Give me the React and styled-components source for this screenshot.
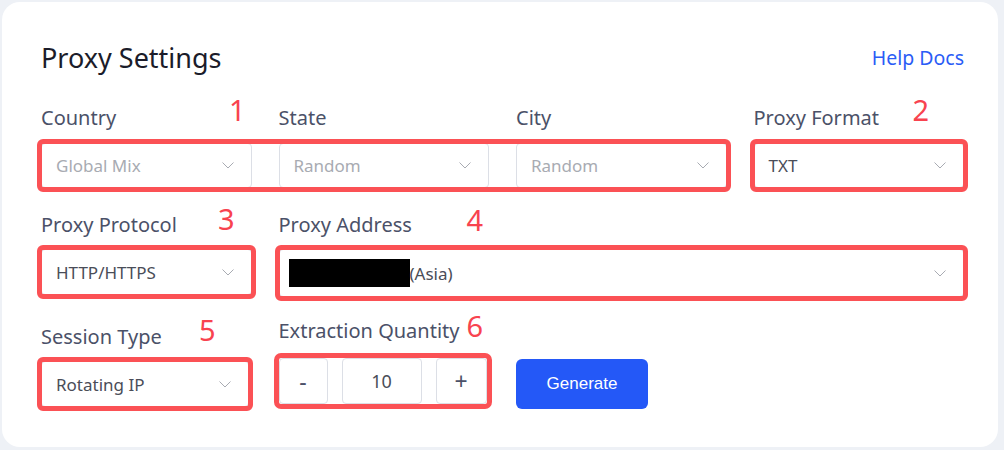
import React from "react";
import styled, { createGlobalStyle } from "styled-components";

const GlobalStyle = createGlobalStyle`
  html, body { margin: 0; padding: 0; }
  body {
    background: #eef1f6;
    font-family: "Noto Sans", "Open Sans", sans-serif;
  }
  * { box-sizing: border-box; }
`;

const Page = styled.div`
  padding: 2px 6px 3px 2px;
`;

const Card = styled.div`
  background: #ffffff;
  border-radius: 18px;
  height: 445px;
  padding: 38px 34px 0 39px;
`;

const Header = styled.div`
  display: flex;
  align-items: center;
  justify-content: space-between;
  margin-bottom: 29px;
`;

const Title = styled.h1`
  margin: 0;
  font-size: 27px;
  line-height: 36px;
  font-weight: 400;
  color: #1b1c2a;
`;

const HelpLink = styled.a`
  font-size: 19.5px;
  line-height: 26px;
  color: #2a5cf6;
  text-decoration: none;
`;

const Grid = styled.div`
  display: grid;
  grid-template-columns: repeat(4, 1fr);
  column-gap: 27px;
  margin-top: ${(p) => p.$top || 0}px;
`;

const Field = styled.div`
  display: flex;
  flex-direction: column;
  gap: ${(p) => p.$gap || 11}px;
  grid-column: span ${(p) => p.$span || 1};
  margin-top: ${(p) => p.$top || 0}px;
`;

const Label = styled.div`
  position: relative;
  font-size: 20px;
  line-height: 26px;
  color: #4b5168;
`;

const Annotation = styled.span`
  position: absolute;
  left: ${(p) => p.$x}px;
  top: ${(p) => p.$y}px;
  font-size: 29px;
  line-height: 29px;
  color: #f8434f;
`;

const Mark = styled.div`
  outline: 5px solid #fb5155;
  outline-offset: -1px;
  border-radius: 2px;
  grid-column: span ${(p) => p.$span || 1};
  width: ${(p) => (p.$w ? `${p.$w}px` : "auto")};
  display: ${(p) => (p.$cols ? "grid" : "block")};
  grid-template-columns: repeat(${(p) => p.$cols || 1}, 1fr);
  column-gap: 27px;
`;

const SelectBox = styled.div`
  display: flex;
  align-items: center;
  justify-content: space-between;
  height: ${(p) => p.$h || 45}px;
  padding: 0 17px 0 14px;
  background: #ffffff;
  border: 1px solid #dcdfe6;
  border-radius: 4px;
  font-size: 17px;
  color: ${(p) => (p.$muted ? "#a8abb2" : "#4a4d58")};
`;

const Value = styled.span`
  display: flex;
  align-items: center;
  white-space: nowrap;
`;

const Redacted = styled.span`
  display: inline-block;
  width: 121px;
  height: 28px;
  background: #000000;
  margin-left: -5px;
`;

const Stepper = styled.div`
  display: flex;
  gap: 14px;
  width: 208px;
  outline: 5px solid #fb5155;
  outline-offset: 0px;
  border-radius: 2px;
`;

const StepButton = styled.button`
  flex: 0 0 ${(p) => p.$w}px;
  height: 46px;
  background: #ffffff;
  border: 1px solid #dcdfe6;
  border-radius: 4px;
  font-family: "Noto Sans", sans-serif;
  font-size: 23px;
  color: #4b5168;
  padding: 0;
`;

const QtyInput = styled.div`
  flex: 1;
  height: 46px;
  display: flex;
  align-items: center;
  justify-content: center;
  border: 1px solid #dcdfe6;
  border-radius: 4px;
  font-size: 18px;
  color: #4a4d58;
`;

const GenerateButton = styled.button`
  justify-self: start;
  align-self: end;
  width: 132px;
  height: 50px;
  margin-bottom: -2px;
  background: #2458f7;
  border: none;
  border-radius: 6px;
  color: #ffffff;
  font-family: "Liberation Sans", Arial, sans-serif;
  font-size: 17px;
`;

const Chevron = () => (
  <svg width="12" height="7" viewBox="0 0 12 7" fill="none">
    <polyline points="0.5,0.5 6,6 11.5,0.5" stroke="#a8abb2" strokeWidth="1" />
  </svg>
);

const Select = ({ value, muted, h }) => (
  <SelectBox $muted={muted} $h={h}>
    <Value>{value}</Value>
    <Chevron />
  </SelectBox>
);

export default function App() {
  return (
    <>
      <GlobalStyle />
      <Page>
        <Card>
          <Header>
            <Title>Proxy Settings</Title>
            <HelpLink href="#">Help Docs</HelpLink>
          </Header>

          <Grid>
            <Label>
              Country<Annotation $x={188} $y={-10}>1</Annotation>
            </Label>
            <Label>State</Label>
            <Label>City</Label>
            <Label>
              Proxy Format<Annotation $x={159} $y={-10}>2</Annotation>
            </Label>
          </Grid>
          <Grid $top={12}>
            <Mark $span={3} $cols={3}>
              <Select value="Global Mix" muted />
              <Select value="Random" muted />
              <Select value="Random" muted />
            </Mark>
            <Mark>
              <Select value="TXT" />
            </Mark>
          </Grid>

          <Grid $top={24}>
            <Field>
              <Label>
                Proxy Protocol<Annotation $x={177} $y={-8}>3</Annotation>
              </Label>
              <Mark>
                <Select value="HTTP/HTTPS" h={46} />
              </Mark>
            </Field>
            <Field $span={3}>
              <Label>
                Proxy Address<Annotation $x={188} $y={-7}>4</Annotation>
              </Label>
              <Mark>
                <Select
                  h={48}
                  value={
                    <>
                      <Redacted />
                      (Asia)
                    </>
                  }
                />
              </Mark>
            </Field>
          </Grid>

          <Grid $top={21}>
            <Field $top={6}>
              <Label>
                Session Type<Annotation $x={158} $y={-9}>5</Annotation>
              </Label>
              <Mark $w={208}>
                <Select value="Rotating IP" h={46} />
              </Mark>
            </Field>
            <Field $gap={14}>
              <Label>
                Extraction Quantity<Annotation $x={188} $y={-7}>6</Annotation>
              </Label>
              <Stepper>
                <StepButton $w={49}>-</StepButton>
                <QtyInput>10</QtyInput>
                <StepButton $w={51}>+</StepButton>
              </Stepper>
            </Field>
            <GenerateButton>Generate</GenerateButton>
          </Grid>
        </Card>
      </Page>
    </>
  );
}
